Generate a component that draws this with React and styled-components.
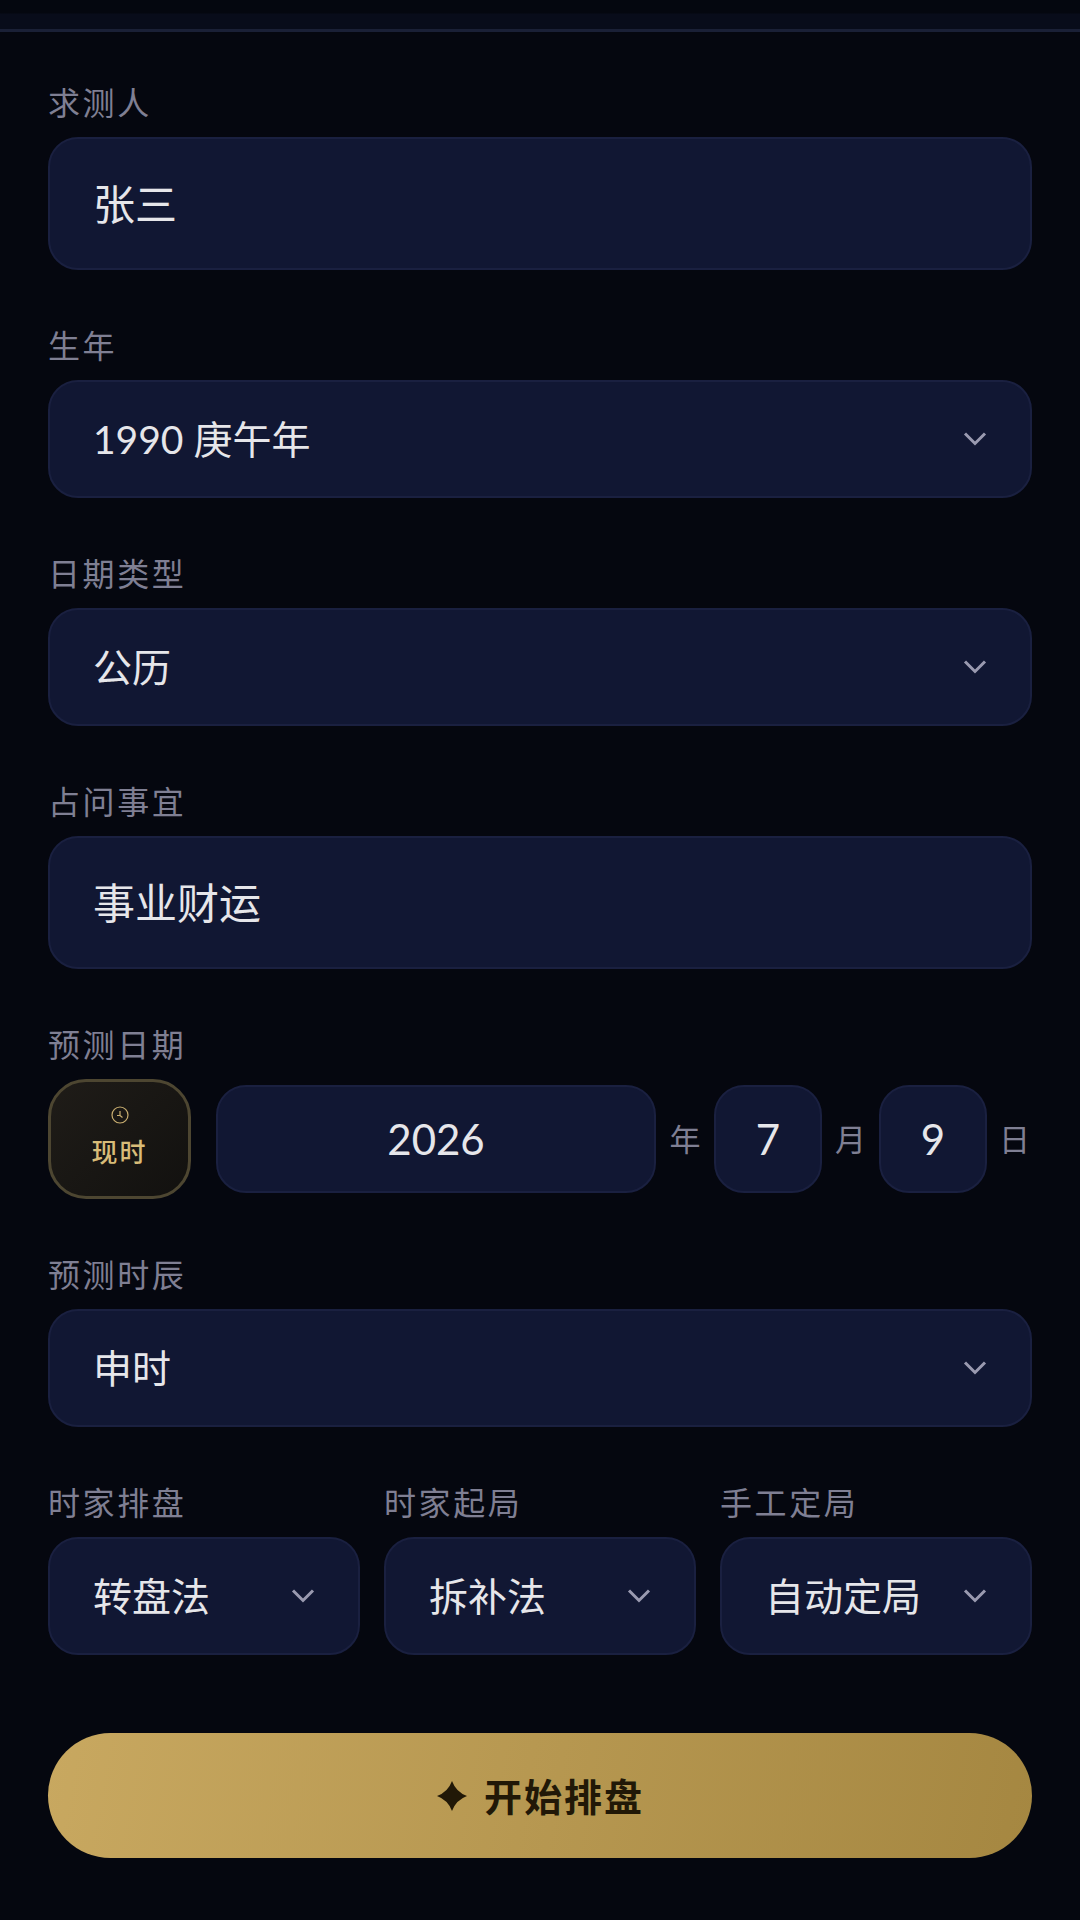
import React from "react";
import styled, { createGlobalStyle } from "styled-components";

const FONT = `Lato, "Noto Sans CJK SC", sans-serif`;

const GlobalStyle = createGlobalStyle`
  html, body {
    margin: 0;
    padding: 0;
    background: #05070f;
  }
  * {
    box-sizing: border-box;
  }
`;

const Page = styled.div`
  width: 1080px;
  height: 1920px;
  overflow: hidden;
  background: #05070f;
  font-family: ${FONT};
`;

const Header = styled.div`
  height: 32px;
  background: linear-gradient(180deg, #04070f 0, #04070f 13px, #080c1a 14px);
  border-bottom: 3px solid #1a2036;
`;

const Form = styled.div`
  display: flex;
  flex-direction: column;
  gap: 60px;
  padding: 55px 48px 0 48px;
`;

const Field = styled.div`
  display: flex;
  flex-direction: column;
  min-width: 0;
`;

const Label = styled.div`
  height: 34px;
  line-height: 32px;
  margin-bottom: 16px;
  font-size: 32px;
  letter-spacing: 2.6px;
  color: #7f7f93;
  white-space: nowrap;
`;

const Box = styled.div`
  display: flex;
  align-items: center;
  height: ${(p) => p.$height || 118}px;
  padding-left: 43px;
  background: #111733;
  border: 2px solid #1a2040;
  border-radius: 30px;
  color: #e6e6ea;
  font-size: ${(p) => p.$size || 39}px;
  white-space: nowrap;
`;

const Value = styled.span`
  flex: 1;
  margin-bottom: 4px;
`;

const Chevron = styled.svg`
  flex: none;
  width: 26px;
  height: 26px;
  margin-right: 42px;
  fill: none;
  stroke: #9a9ab0;
  stroke-width: 3;
`;

const DateRow = styled.div`
  display: flex;
  align-items: center;
`;

const NowButton = styled.div`
  flex: none;
  width: 143px;
  height: 120px;
  margin-right: 25px;
  padding-bottom: 3px;
  display: flex;
  flex-direction: column;
  align-items: center;
  justify-content: center;
  gap: 8px;
  background: linear-gradient(135deg, #1f1c18, #12110f);
  border: 3px solid #4d4631;
  border-radius: 38px;
  color: #d8bc78;
  font-size: 26px;
  font-weight: 500;
  letter-spacing: 2px;
`;

const NumberBox = styled.div`
  flex: ${(p) => (p.$wide ? "1" : "none")};
  width: ${(p) => (p.$wide ? "auto" : "108px")};
  height: 108px;
  display: flex;
  align-items: center;
  justify-content: center;
  background: #111733;
  border: 2px solid #1a2040;
  border-radius: 30px;
  color: #e6e6ea;
  font-size: 42px;
`;

const Unit = styled.div`
  flex: none;
  width: ${(p) => p.$width || 58}px;
  margin-bottom: 4px;
  text-align: center;
  font-size: 31px;
  color: #7f7f93;
`;

const LastUnit = styled(Unit)`
  width: 45px;
  text-align: right;
  padding-right: 2px;
`;

const EngineRow = styled.div`
  display: grid;
  grid-template-columns: repeat(3, 1fr);
  gap: 24px;
`;

const StartButton = styled.div`
  height: 125px;
  margin-top: 18px;
  display: flex;
  align-items: center;
  justify-content: center;
  gap: 16px;
  background: linear-gradient(100deg, #c8a860 0%, #a58741 100%);
  border-radius: 63px;
  color: #211807;
  font-size: 38px;
  font-weight: 700;
  letter-spacing: 2px;
`;

const ButtonText = styled.span`
  margin-bottom: 2px;
`;

const ChevronIcon = () => (
  <Chevron viewBox="0 0 26 26">
    <path d="M3 7.5 13 17.5 23 7.5" />
  </Chevron>
);

const SelectBox = ({ children }) => (
  <Box>
    <Value>{children}</Value>
    <ChevronIcon />
  </Box>
);

export default function App() {
  return (
    <Page>
      <GlobalStyle />
      <Header />
      <Form>
        <Field>
          <Label>求测人</Label>
          <Box $height={133} $size={42}>
            <Value>张三</Value>
          </Box>
        </Field>
        <Field>
          <Label>生年</Label>
          <SelectBox>1990 庚午年</SelectBox>
        </Field>
        <Field>
          <Label>日期类型</Label>
          <SelectBox>公历</SelectBox>
        </Field>
        <Field>
          <Label>占问事宜</Label>
          <Box $height={133} $size={42}>
            <Value>事业财运</Value>
          </Box>
        </Field>
        <Field>
          <Label>预测日期</Label>
          <DateRow>
            <NowButton>
              <svg width="18" height="18" viewBox="0 0 18 18" fill="none" stroke="#c9ae70" strokeWidth="1.2">
                <circle cx="9" cy="9" r="8" />
                <path d="M9 5v4.5H6M9 9.5l2.5 2" />
              </svg>
              现时
            </NowButton>
            <NumberBox $wide>2026</NumberBox>
            <Unit>年</Unit>
            <NumberBox>7</NumberBox>
            <Unit $width={57}>月</Unit>
            <NumberBox>9</NumberBox>
            <LastUnit>日</LastUnit>
          </DateRow>
        </Field>
        <Field>
          <Label>预测时辰</Label>
          <SelectBox>申时</SelectBox>
        </Field>
        <EngineRow>
          <Field>
            <Label>时家排盘</Label>
            <SelectBox>转盘法</SelectBox>
          </Field>
          <Field>
            <Label>时家起局</Label>
            <SelectBox>拆补法</SelectBox>
          </Field>
          <Field>
            <Label>手工定局</Label>
            <SelectBox>自动定局</SelectBox>
          </Field>
        </EngineRow>
        <StartButton>
          <svg width="32" height="32" viewBox="0 0 32 32" fill="#211807">
            <path d="M16 1Q20 12 31 16 20 20 16 31 12 20 1 16 12 12 16 1Z" />
          </svg>
          <ButtonText>开始排盘</ButtonText>
        </StartButton>
      </Form>
    </Page>
  );
}
